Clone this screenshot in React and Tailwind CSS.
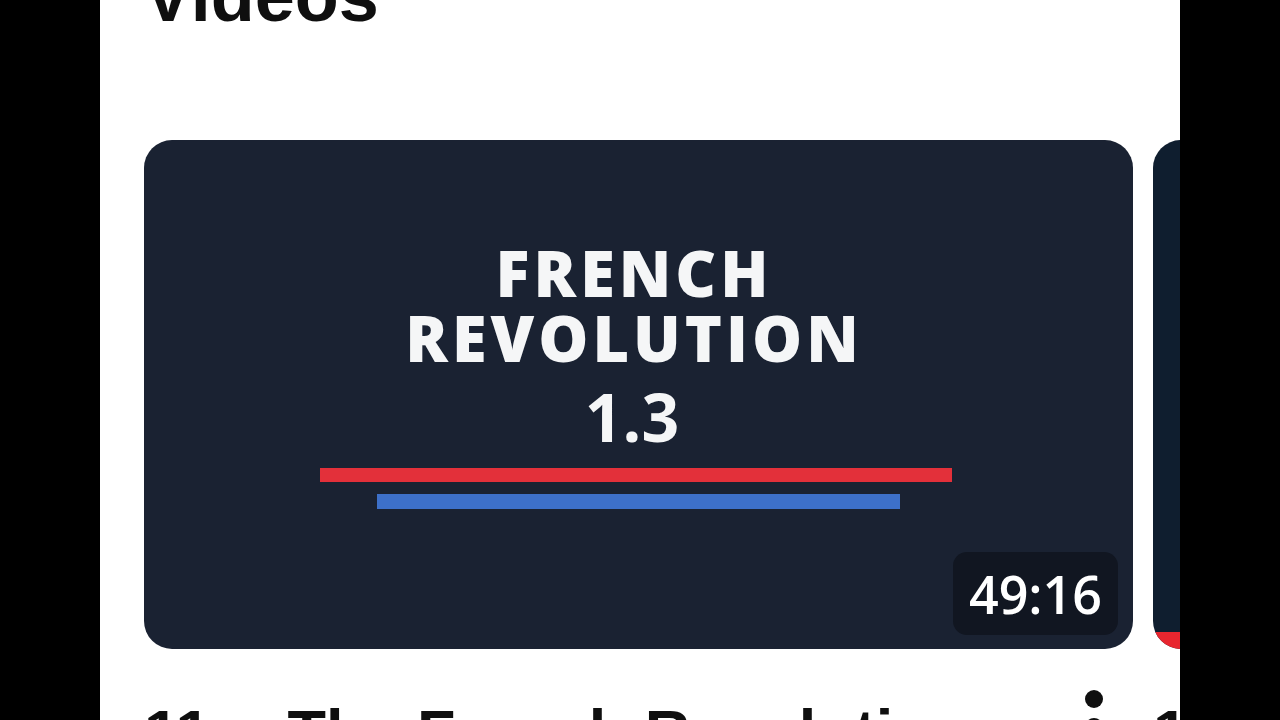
const MoreDots = () => (
  <div className="flex flex-col gap-[10px] shrink-0 mt-[-6px]">
    <span className="w-[18px] h-[18px] rounded-full bg-[#0f0f0f]"></span>
    <span className="w-[18px] h-[18px] rounded-full bg-[#0f0f0f]"></span>
    <span className="w-[18px] h-[18px] rounded-full bg-[#0f0f0f]"></span>
  </div>
);

const VideoTitle = ({ num }) => (
  <div className="flex items-start justify-between mt-[47px] pr-[30px]">
    <span className="text-[63px] leading-[1.15] font-bold whitespace-nowrap">
      {num}
      <span className="px-[28px]">·</span>
      The French Revolution
    </span>
    <MoreDots />
  </div>
);

const Thumbnail = () => (
  <div className="relative w-[989px] h-[509px] rounded-[28px] bg-[#1a2232] overflow-hidden flex flex-col items-center pt-[100px]">
    <div className="flex flex-col items-center pr-[13px] font-['Open_Sans',sans-serif] font-extrabold text-[#f5f6f7]">
      <span className="text-[63px] leading-[65px] tracking-[4px] pl-[4px]">FRENCH</span>
      <span className="text-[63px] leading-[65px] tracking-[4px] pl-[4px]">REVOLUTION</span>
      <span className="text-[66px] leading-[70px] mt-[11px] font-bold">1.3</span>
    </div>
    <div className="w-[632px] h-[14px] bg-[#e3303a] mt-[17px] mr-[5px]"></div>
    <div className="w-[523px] h-[15px] bg-[#3d70c9] mt-[12px]"></div>
    <div className="absolute right-[15px] bottom-[14px] w-[165px] h-[83px] rounded-[14px] bg-[#111621] flex items-center justify-center">
      <span className="font-['Open_Sans',sans-serif] font-semibold text-[52px] leading-none text-white">49:16</span>
    </div>
  </div>
);

export default function App() {
  return (
    <div className="w-[1280px] h-[720px] bg-black flex justify-center overflow-hidden">
      <div className="w-[1080px] h-[720px] bg-white overflow-hidden flex flex-col font-['Liberation_Sans',Arial,sans-serif] text-[#0f0f0f]">
        <h2 className="mt-[-40px] pl-[44px] text-[72px] leading-none font-bold">Videos</h2>
        <div className="flex gap-[20px] pl-[44px] mt-[108px]">
          <div className="flex flex-col shrink-0 w-[989px]">
            <Thumbnail />
            <VideoTitle num="11" />
          </div>
          <div className="flex flex-col shrink-0 w-[989px]">
            <div className="relative w-[989px] h-[509px] rounded-[28px] bg-[#0f1e2f] overflow-hidden">
              <div className="absolute left-0 right-0 bottom-0 h-[17px] bg-[#e8262f]"></div>
            </div>
            <VideoTitle num="12" />
          </div>
        </div>
      </div>
    </div>
  );
}
